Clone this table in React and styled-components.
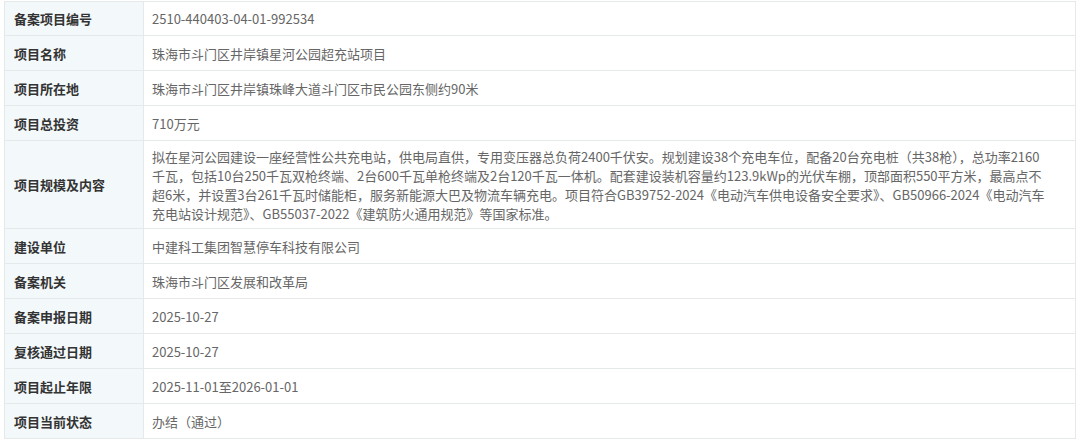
import React from "react";
import styled, { createGlobalStyle } from "styled-components";

const Global = createGlobalStyle`
  html, body { margin: 0; padding: 0; background: #fff; }
  body { font-family: "Noto Sans CJK SC", "Microsoft YaHei", sans-serif; }
`;

const Wrap = styled.div`
  padding: 1px 4px 0 4px;
`;

const Table = styled.table`
  width: 100%;
  border-collapse: collapse;
  table-layout: fixed;
  font-size: 13px;
`;

const Row = styled.tr`
  &:first-child > th {
    height: 34px;
  }
`;

const Label = styled.th`
  width: 139px;
  box-sizing: border-box;
  background: #f3f9fb;
  border: 1px solid #e6e9ea;
  color: #333;
  font-weight: 700;
  text-align: left;
  padding: 0 0 0 9px;
  height: ${(p) => (p.$tall ? 87 : 35)}px;
  vertical-align: middle;
  line-height: 19px;
`;

const Value = styled.td`
  box-sizing: border-box;
  border: 1px solid #e6e9ea;
  color: #666;
  padding: ${(p) => (p.$tall ? "6px 8px 5px 8px" : "0 8px")};
  vertical-align: middle;
  line-height: 19px;
`;

const Line = styled.span`
  display: block;
  white-space: nowrap;
`;

const rows = [
  ["备案项目编号", "2510-440403-04-01-992534"],
  ["项目名称", "珠海市斗门区井岸镇星河公园超充站项目"],
  ["项目所在地", "珠海市斗门区井岸镇珠峰大道斗门区市民公园东侧约90米"],
  ["项目总投资", "710万元"],
  [
    "项目规模及内容",
    [
      "拟在星河公园建设一座经营性公共充电站，供电局直供，专用变压器总负荷2400千伏安。规划建设38个充电车位，配备20台充电桩（共38枪），总功率2160",
      "千瓦，包括10台250千瓦双枪终端、2台600千瓦单枪终端及2台120千瓦一体机。配套建设装机容量约123.9kWp的光伏车棚，顶部面积550平方米，最高点不",
      "超6米，并设置3台261千瓦时储能柜，服务新能源大巴及物流车辆充电。项目符合GB39752-2024《电动汽车供电设备安全要求》、GB50966-2024《电动汽车",
      "充电站设计规范》、GB55037-2022《建筑防火通用规范》等国家标准。",
    ],
  ],
  ["建设单位", "中建科工集团智慧停车科技有限公司"],
  ["备案机关", "珠海市斗门区发展和改革局"],
  ["备案申报日期", "2025-10-27"],
  ["复核通过日期", "2025-10-27"],
  ["项目起止年限", "2025-11-01至2026-01-01"],
  ["项目当前状态", "办结（通过）"],
];

export default function App() {
  return (
    <Wrap>
      <Global />
      <Table>
        <tbody>
          {rows.map(([k, v]) => {
            const tall = Array.isArray(v);
            return (
              <Row key={k}>
                <Label $tall={tall}>{k}</Label>
                <Value $tall={tall}>
                  {tall ? v.map((l, i) => <Line key={i}>{l}</Line>) : v}
                </Value>
              </Row>
            );
          })}
        </tbody>
      </Table>
    </Wrap>
  );
}
